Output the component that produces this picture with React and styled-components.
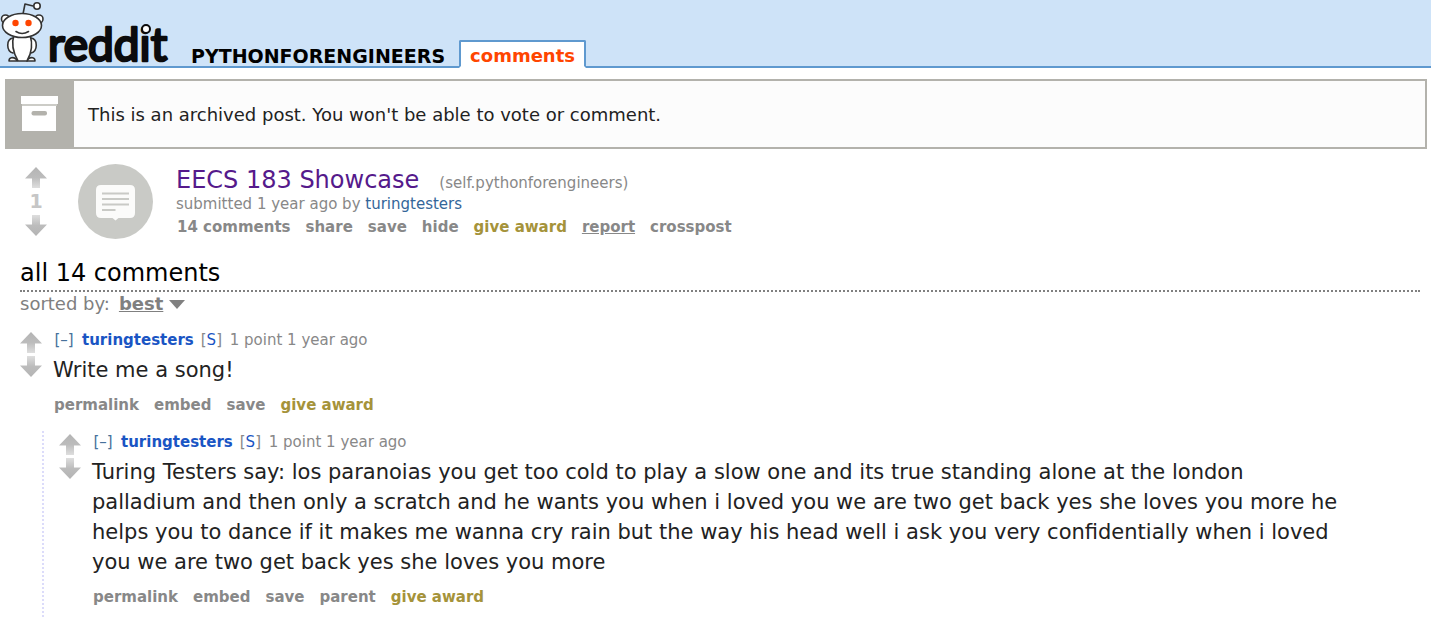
import React from 'react';
import styled, { createGlobalStyle, css } from 'styled-components';

const GlobalStyle = createGlobalStyle`
  body {
    margin: 0;
    background: #fff;
    color: #888;
    font-family: Verdana, 'DejaVu Sans', sans-serif;
    font-size: 15px;
    line-height: 22px;
  }
  a { color: inherit; text-decoration: none; }
  button { font: inherit; color: inherit; background: none; border: 0; padding: 0; cursor: pointer; }
  h1, h2, p { margin: 0; font-weight: normal; }
`;

const Header = styled.header`
  display: flex;
  align-items: flex-end;
  height: 66px;
  background: #cee3f8;
  border-bottom: 2px solid #5f99cf;
`;

const Logo = styled.a`
  display: block;
  width: 172px;
  height: 66px;
  margin-right: 19px;
  svg { display: block; }
  text { font-family: Lato, sans-serif; font-weight: 400; font-size: 46px; }
`;

const SubredditName = styled.a`
  margin-right: 14px;
  color: #000;
  font-weight: bold;
  font-size: 19px;
  line-height: 20px;
  text-transform: uppercase;
`;

const Tab = styled.a`
  margin-bottom: -2px;
  padding: 4px 9px 0;
  border: 2px solid #5f99cf;
  border-bottom-color: #fff;
  border-radius: 2px 2px 0 0;
  background: #fff;
  color: #ff4500;
  font-weight: bold;
  font-size: 18px;
  line-height: 20px;
`;

const InfoBar = styled.section`
  display: flex;
  align-items: center;
  margin: 11px 4px 0 5px;
  border: 2px solid #b3b2ac;
  background: #fcfcfc;
  color: #222;
  font-size: 18px;
  line-height: 24px;
  p { padding-top: 2px; }
`;

const InfoIcon = styled.div`
  display: flex;
  align-items: center;
  justify-content: center;
  width: 67px;
  height: 66px;
  margin-right: 14px;
  background: #b3b2ac;
`;

const Post = styled.article`
  display: flex;
  margin: 15px 20px 0 25px;
`;

const Votes = styled.div`
  display: flex;
  flex-direction: column;
  flex: none;
  width: 22px;
  gap: ${p => p.$gap || 0}px;
  padding-top: 3px;
  button { display: block; height: 21px; }
  svg { display: block; }
`;

const Score = styled.span`
  height: 27px;
  color: #c6c6c6;
  font-weight: bold;
  font-size: 19px;
  line-height: 27px;
  text-align: center;
`;

const Thumb = styled.a`
  flex: none;
  height: 75px;
  margin: 0 23px 0 31px;
  svg { display: block; }
`;

const TitleRow = styled.div`
  display: flex;
  align-items: baseline;
  gap: 20px;
  height: 30px;
`;

const Title = styled.h1`
  color: #551a8b;
  font-size: 24px;
  line-height: 32px;
`;

const Tagline = styled.p`
  line-height: 20px;
`;

const CommentTagline = styled.div`
  display: flex;
  gap: 7px;
  line-height: 22px;
`;

const Author = styled.a`
  color: ${p => (p.$strong ? '#1a55c4' : '#336699')};
  font-weight: ${p => (p.$strong ? 'bold' : 'normal')};
`;

const Submitter = styled.span`
  min-width: 22px;
  a { color: #1a55c4; }
`;

const Toggle = styled.button`
  min-width: 22px;
  color: #47719b;
`;

const Actions = styled.ul`
  display: flex;
  gap: 15px;
  margin: ${p => p.$top || 0}px 0 0;
  padding: 0 0 0 1px;
  list-style: none;
  font-weight: bold;
  line-height: 22px;
`;

const Action = styled.a`
  ${p => p.$gold && css`color: #a5933a;`}
  ${p => p.$underline && css`text-decoration: underline;`}
`;

const Comments = styled.section`
  margin: 18px 11px 0 20px;
`;

const CommentsTitle = styled.h2`
  padding-bottom: 1px;
  border-bottom: 2px dotted #808080;
  color: #000;
  font-size: 24px;
  line-height: 32px;
`;

const Sort = styled.div`
  display: flex;
  align-items: center;
  gap: 9px;
  color: #808080;
  font-size: 18px;
  line-height: 24px;
  button { display: flex; align-items: center; gap: 6px; font-weight: bold; }
  span { text-decoration: underline; }
`;

const Comment = styled.article`
  display: flex;
  gap: 11px;
`;

const Thread = styled.div`
  margin-top: 13px;
`;

const Replies = styled.div`
  margin: 15px 0 0 22px;
  padding: 0 0 9px 15px;
  border-left: 2px dotted #dcdcfa;
`;

const Body = styled.p`
  max-width: 1260px;
  padding-top: 4px;
  color: #222;
  font-size: 21px;
  line-height: 30px;
`;

function Arrow({ down }) {
  const id = down ? 'fade-down' : 'fade-up';
  return (
    <svg width="22" height="21" viewBox="0 0 22 21" aria-hidden="true">
      <defs>
        <linearGradient id={id} x1="0" x2="0" y1={down ? 1 : 0} y2={down ? 0 : 1}>
          <stop offset="0" stopColor="#b4b4b4" />
          <stop offset="0.5" stopColor="#bcbcbc" />
          <stop offset="1" stopColor="#dedede" />
        </linearGradient>
      </defs>
      <path
        d={down ? 'M7 0H15V9.500H22L11 21L0 9.500H7Z' : 'M11 0L22 11.500H15V21H7V11.500H0Z'}
        fill={`url(#${id})`}
      />
    </svg>
  );
}

function VoteButtons({ score, gap }) {
  return (
    <Votes $gap={gap}>
      <button aria-label="upvote"><Arrow /></button>
      {score && <Score>{score}</Score>}
      <button aria-label="downvote"><Arrow down /></button>
    </Votes>
  );
}

function RedditLogo() {
  return (
    <svg width="172" height="66" viewBox="0 0 172 66" role="img" aria-label="reddit">
      <g fill="#fff" stroke="#333" strokeWidth="1.600" strokeLinecap="round" strokeLinejoin="round">
        <path d="M23 14L25 4L33 6" fill="none" />
        <circle cx="37" cy="6" r="3.200" />
        <circle cx="5.500" cy="19" r="4" />
        <circle cx="39" cy="19" r="4" />
        <path d="M13 38C6 39 6 51 13 53M31 38C38 39 38 51 31 53" />
        <path d="M9 61C9 57 13 57 16 59L17 61ZM35 61C35 57 31 57 28 59L27 61Z" />
        <path d="M14 35C11 44 14 54 18 61H27C31 54 33 44 30 35Z" />
        <ellipse cx="22" cy="25.500" rx="19.500" ry="12" />
        <path d="M16 31.500Q22 35.500 28.500 31.500" fill="none" />
      </g>
      <circle cx="15.500" cy="23" r="3.200" fill="#ff4500" />
      <circle cx="28.500" cy="23" r="3.200" fill="#ff4500" />
      <text x="48" y="61" fill="#0b0b0d" stroke="#0b0b0d" strokeWidth="2.600" strokeLinejoin="round">reddit</text>
      <circle cx="146" cy="29" r="4" fill="#fff" stroke="#0b0b0d" strokeWidth="2" />
    </svg>
  );
}

function ArchiveIcon() {
  return (
    <svg width="40" height="36" viewBox="0 0 40 36" aria-hidden="true">
      <path d="M0 0H37V8H0ZM1 10H35V35H1Z" fill="#fff" />
      <path d="M1 9H36" stroke="#d5d4d0" strokeWidth="1.500" />
      <rect x="10.500" y="15" width="15.500" height="4.500" rx="2" fill="#b3b2ac" />
    </svg>
  );
}

function SelfThumb() {
  return (
    <svg width="75" height="75" viewBox="0 0 75 75" aria-hidden="true">
      <circle cx="37.500" cy="37.500" r="37.500" fill="#c9cac6" />
      <path
        d="M23 21H52Q57 21 57 26V49Q57 54 52 54H40.500L37.500 56.500L34.500 54H23Q18 54 18 49V26Q18 21 23 21Z"
        fill="#fbfbfa"
      />
      <path d="M24 29.500H51M24 35H51M24 40.500H51M24 46H37.500" stroke="#c9cac6" strokeWidth="2.200" />
    </svg>
  );
}

function CommentItem({ text, actions }) {
  return (
    <Comment>
      <VoteButtons gap={3} />
      <div>
        <CommentTagline>
          <Toggle>[–]</Toggle>
          <Author href="#" $strong>turingtesters</Author>
          <Submitter>[<a href="#">S</a>]</Submitter>
          <span>1 point 1 year ago</span>
        </CommentTagline>
        <Body>{text}</Body>
        <Actions $top={9}>
          {actions.map(a => (
            <li key={a}><Action href="#" $gold={a === 'give award'}>{a}</Action></li>
          ))}
        </Actions>
      </div>
    </Comment>
  );
}

const POST_ACTIONS = ['14 comments', 'share', 'save', 'hide', 'give award', 'report', 'crosspost'];

const REPLY =
  'Turing Testers say: los paranoias you get too cold to play a slow one and its true standing alone at the london palladium and then only a scratch and he wants you when i loved you we are two get back yes she loves you more he helps you to dance if it makes me wanna cry rain but the way his head well i ask you very confidentially when i loved you we are two get back yes she loves you more';

export default function App() {
  return (
    <>
      <GlobalStyle />
      <Header>
        <Logo href="#"><RedditLogo /></Logo>
        <SubredditName href="#">pythonforengineers</SubredditName>
        <Tab href="#">comments</Tab>
      </Header>
      <main>
        <InfoBar>
          <InfoIcon><ArchiveIcon /></InfoIcon>
          <p>This is an archived post. You won't be able to vote or comment.</p>
        </InfoBar>
        <Post>
          <VoteButtons score="1" />
          <Thumb href="#" aria-label="EECS 183 Showcase"><SelfThumb /></Thumb>
          <div>
            <TitleRow>
              <Title><a href="#">EECS 183 Showcase</a></Title>
              <span>(<a href="#">self.pythonforengineers</a>)</span>
            </TitleRow>
            <Tagline>submitted 1 year ago by <Author href="#">turingtesters</Author></Tagline>
            <Actions $top={2}>
              {POST_ACTIONS.map(a => (
                <li key={a}>
                  <Action href="#" $gold={a === 'give award'} $underline={a === 'report'}>{a}</Action>
                </li>
              ))}
            </Actions>
          </div>
        </Post>
        <Comments>
          <CommentsTitle>all 14 comments</CommentsTitle>
          <Sort>
            sorted by:
            <button>
              <span>best</span>
              <svg width="16" height="9" viewBox="0 0 16 9" aria-hidden="true">
                <path d="M0 0H16L8 9Z" fill="#808080" />
              </svg>
            </button>
          </Sort>
          <Thread>
            <CommentItem text="Write me a song!" actions={['permalink', 'embed', 'save', 'give award']} />
            <Replies>
              <CommentItem text={REPLY} actions={['permalink', 'embed', 'save', 'parent', 'give award']} />
            </Replies>
          </Thread>
        </Comments>
      </main>
    </>
  );
}
